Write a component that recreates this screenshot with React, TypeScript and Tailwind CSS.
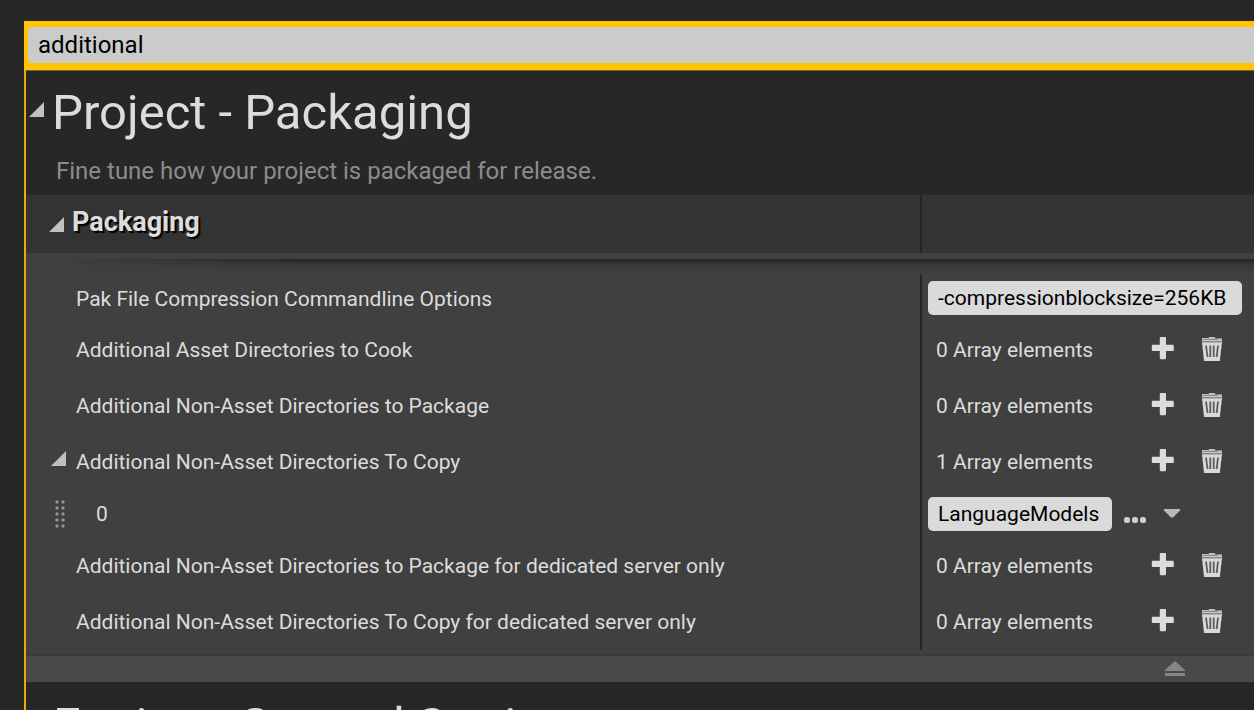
import type { ReactNode } from "react";

function Expander({ label }: { label: string }) {
  return (
    <button type="button" aria-label={label} aria-expanded="true" className="block shrink-0">
      <svg width="15" height="15" viewBox="0 0 15 15" aria-hidden="true">
        <path d="M15 0V15H0Z" fill="#c0c0c0" />
      </svg>
    </button>
  );
}

function PlusIcon() {
  return (
    <svg width="24" height="24" viewBox="0 0 24 24" aria-hidden="true">
      <path
        d="M9.500 0h4.700q.8 0 .8.800V7.700h6.600q1.200 0 1.200 1.200v4q0 1.200-1.200 1.200H15v6.900q0 1.200-1.200 1.200H10q-1.200 0-1.200-1.200V14.100H1.600q-.8 0-.8-.8V8.500q0-.8.8-.8H8.800V.8q0-.8.700-.8Z"
        fill="#dcdcdc"
      />
    </svg>
  );
}

function TrashIcon() {
  return (
    <svg width="22" height="24" viewBox="0 0 22 24" aria-hidden="true">
      <path d="M8 0H14V1.500H21V4.500H1V1H8Z" fill="#c4c4c4" />
      <path d="M1.500 2.400H17" stroke="#858585" strokeWidth="1" />
      <path d="M1 5H21L18.800 24H3Z" fill="#d8d8d8" />
      <path d="M2 5.200H20" stroke="#9a9a9a" strokeWidth="1" />
      <path d="M5 8.500L6.600 20M9.300 8.500V20M12.700 8.500V20M17 8.500L15.600 20" stroke="#5e5e5e" strokeWidth="1.800" />
    </svg>
  );
}

function ArrayValue({ count, name }: { count: number; name: string }) {
  return (
    <div className="flex items-center pl-2">
      <span className="w-[215px]">{count} Array elements</span>
      <div className="flex items-center gap-[26px] pb-0.5">
        <button type="button" aria-label={`Add element to ${name}`}>
          <PlusIcon />
        </button>
        <button type="button" aria-label={`Clear ${name}`}>
          <TrashIcon />
        </button>
      </div>
    </div>
  );
}

function Row({ label, height, value }: { label: ReactNode; height: string; value: ReactNode }) {
  return (
    <div className={`grid grid-cols-[minmax(0,1fr)_334px] ${height}`}>
      <div className="flex items-center">{label}</div>
      <div className="flex items-center border-l-2 border-[#232323] pl-1.5">{value}</div>
    </div>
  );
}

function Name({ children }: { children: ReactNode }) {
  return <span className="pl-[50px]">{children}</span>;
}

const FIELD = "h-[34px] rounded-[5px] bg-[#dadada] px-2.5 text-[21px] text-black outline-none";

export default function App() {
  return (
    <div className="h-screen overflow-hidden bg-[#272727] pt-[21px] pl-6 font-['Roboto',sans-serif] text-[#dcdcdc]">
      <div className="bg-[#ffc402] pt-1.5 pb-[7px] pl-1">
        <input
          type="text"
          aria-label="Search settings"
          defaultValue="additional"
          className="block h-9 w-full rounded-l-[4px] bg-[#cbcbcb] px-2.5 text-2xl text-black outline-none"
        />
      </div>
      <main className="h-full border-l-2 border-[#e6ae00]">
        <section>
          <header className="h-[125px] border-t border-[#7a6010] pt-[10px]">
            <div className="flex items-center gap-2 pl-[3px]">
              <div className="pb-2">
                <Expander label="Collapse Project - Packaging" />
              </div>
              <h1 className="text-[49px] leading-[64px]">Project - Packaging</h1>
            </div>
            <p className="pt-2.5 pl-[30px] text-2xl leading-8 text-[#8c8c8c]">
              Fine tune how your project is packaged for release.
            </p>
          </header>

          <div className="grid h-[58px] grid-cols-[minmax(0,1fr)_334px] bg-[#333333]">
            <div className="flex items-center gap-2 pb-1 pl-[23px]">
              <div className="pt-1">
                <Expander label="Collapse Packaging" />
              </div>
              <h2 className="text-[27px] leading-9 font-bold [text-shadow:2px_2px_1px_#000]">Packaging</h2>
            </div>
            <div className="border-l-2 border-[#232323]" />
          </div>
          <div className="h-1.5 bg-[#404040]" />

          <div className="bg-[#404040] text-[21px] leading-7">
            <div className="h-4 bg-linear-to-b from-[#242424] via-[#393939] via-40% to-[#404040] [mask-image:linear-gradient(to_right,transparent_2%,black_24%)]" />
            <Row
              height="h-[47px]"
              label={
                <label htmlFor="compression" className="pl-[50px]">
                  Pak File Compression Commandline Options
                </label>
              }
              value={
                <div className="flex pb-0.5">
                  <input
                    id="compression"
                    type="text"
                    defaultValue="-compressionblocksize=256KB"
                    className={`${FIELD} w-[314px]`}
                  />
                </div>
              }
            />
            <Row
              height="h-14"
              label={<Name>Additional Asset Directories to Cook</Name>}
              value={<ArrayValue count={0} name="Additional Asset Directories to Cook" />}
            />
            <Row
              height="h-14"
              label={<Name>Additional Non-Asset Directories to Package</Name>}
              value={<ArrayValue count={0} name="Additional Non-Asset Directories to Package" />}
            />
            <Row
              height="h-14"
              label={
                <div className="flex items-center gap-2.5 pl-[25px]">
                  <div className="pb-2">
                    <Expander label="Collapse Additional Non-Asset Directories To Copy" />
                  </div>
                  <span>Additional Non-Asset Directories To Copy</span>
                </div>
              }
              value={<ArrayValue count={1} name="Additional Non-Asset Directories To Copy" />}
            />
            <Row
              height="h-12"
              label={
                <div className="flex items-center gap-[30px] pl-7">
                  <svg width="12" height="30" viewBox="0 0 12 30" aria-hidden="true">
                    {[3, 9, 15, 21, 27].map((y) => (
                      <g key={y} fill="#929292">
                        <circle cx="3" cy={y} r="1.700" />
                        <circle cx="9" cy={y} r="1.700" />
                      </g>
                    ))}
                  </svg>
                  <label htmlFor="copy-0">0</label>
                </div>
              }
              value={
                <>
                  <input id="copy-0" type="text" defaultValue="LanguageModels" className={`${FIELD} w-[184px]`} />
                  <button type="button" aria-label="Browse for a directory" className="ml-3 pt-3">
                    <svg width="24" height="8" viewBox="0 0 24 8" fill="#d0d0d0" aria-hidden="true">
                      <rect x="0" y="1" width="6" height="6" rx="2.500" />
                      <rect x="8" y="1" width="6" height="6" rx="2.500" />
                      <rect x="16" y="1" width="6" height="6" rx="2.500" />
                    </svg>
                  </button>
                  <button type="button" aria-label="Element options" className="ml-4 pb-0.5">
                    <svg width="16" height="9" viewBox="0 0 16 9" aria-hidden="true">
                      <path d="M0 0H16V1.500L9 8.500H7L0 1.500Z" fill="#b8b8b8" />
                    </svg>
                  </button>
                </>
              }
            />
            <Row
              height="h-14"
              label={<Name>Additional Non-Asset Directories to Package for dedicated server only</Name>}
              value={
                <ArrayValue count={0} name="Additional Non-Asset Directories to Package for dedicated server only" />
              }
            />
            <Row
              height="h-14"
              label={<Name>Additional Non-Asset Directories To Copy for dedicated server only</Name>}
              value={<ArrayValue count={0} name="Additional Non-Asset Directories To Copy for dedicated server only" />}
            />
            <div className="h-1" />
          </div>

          <div className="flex h-7 items-center justify-end border-t-2 border-[#3a3a3a] bg-[#494949] pr-[69px] pb-0.5">
            <button type="button" aria-label="Hide advanced properties">
              <svg width="20" height="15" viewBox="0 0 20 15" fill="#858585" aria-hidden="true">
                <path d="M10 0L20 9V10H0V9Z" />
                <path d="M0 12H20V15H0Z" />
              </svg>
            </button>
          </div>
        </section>

        <section className="pt-3 pl-[27px]">
          <h1 className="text-[49px] leading-[64px]">Engine - General Settings</h1>
        </section>
      </main>
    </div>
  );
}
